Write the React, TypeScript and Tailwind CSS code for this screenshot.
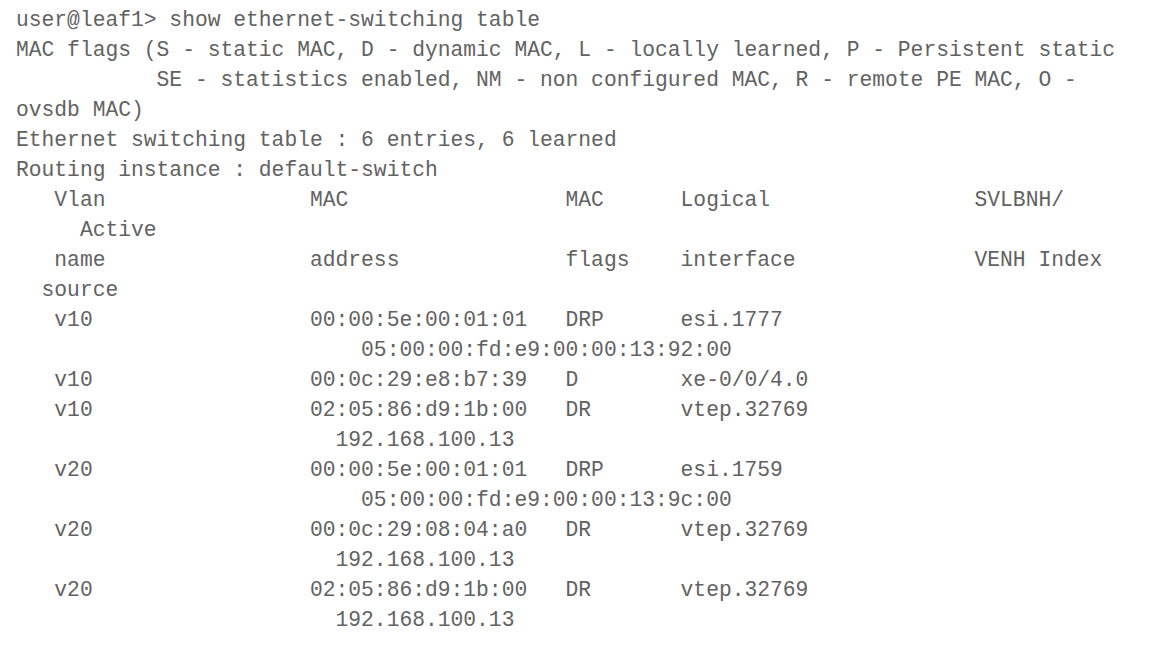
import React from 'react';

type Entry = {
  vlan: string;
  mac: string;
  flags: string;
  iface: string;
  nh?: string;
  nhIndent?: number;
};

const entries: Entry[] = [
  { vlan: 'v10', mac: '00:00:5e:00:01:01', flags: 'DRP', iface: 'esi.1777', nh: '05:00:00:fd:e9:00:00:13:92:00', nhIndent: 27 },
  { vlan: 'v10', mac: '00:0c:29:e8:b7:39', flags: 'D', iface: 'xe-0/0/4.0' },
  { vlan: 'v10', mac: '02:05:86:d9:1b:00', flags: 'DR', iface: 'vtep.32769', nh: '192.168.100.13', nhIndent: 25 },
  { vlan: 'v20', mac: '00:00:5e:00:01:01', flags: 'DRP', iface: 'esi.1759', nh: '05:00:00:fd:e9:00:00:13:9c:00', nhIndent: 27 },
  { vlan: 'v20', mac: '00:0c:29:08:04:a0', flags: 'DR', iface: 'vtep.32769', nh: '192.168.100.13', nhIndent: 25 },
  { vlan: 'v20', mac: '02:05:86:d9:1b:00', flags: 'DR', iface: 'vtep.32769', nh: '192.168.100.13', nhIndent: 25 },
];

// columns: vlan @3, mac @23, flags @43, logical @52, svlbnh @75
const row = (a: string, b: string, c: string, d: string, e = '') =>
  ('   ' + a.padEnd(20) + b.padEnd(20) + c.padEnd(9) + d.padEnd(23) + e).trimEnd();

const lines: string[] = [
  'user@leaf1> show ethernet-switching table',
  'MAC flags (S - static MAC, D - dynamic MAC, L - locally learned, P - Persistent static',
  '           SE - statistics enabled, NM - non configured MAC, R - remote PE MAC, O -',
  'ovsdb MAC)',
  'Ethernet switching table : 6 entries, 6 learned',
  'Routing instance : default-switch',
  row('Vlan', 'MAC', 'MAC', 'Logical', 'SVLBNH/'),
  '     Active',
  row('name', 'address', 'flags', 'interface', 'VENH Index'),
  '  source',
];

entries.forEach(e => {
  lines.push(row(e.vlan, e.mac, e.flags, e.iface));
  if (e.nh) lines.push(' '.repeat(e.nhIndent || 0) + e.nh);
});

export default function App() {
  return (
    <div className="w-[1159px] h-[655px] bg-white overflow-hidden">
      <div className="pl-[16px] pt-[5px] text-[21.3px] leading-[30px] text-[#626262] font-['Liberation_Mono','Courier_New',monospace]">
        {lines.map((l, i) => (
          <div key={i} className="whitespace-pre h-[30px]">{l}</div>
        ))}
      </div>
    </div>
  );
}
